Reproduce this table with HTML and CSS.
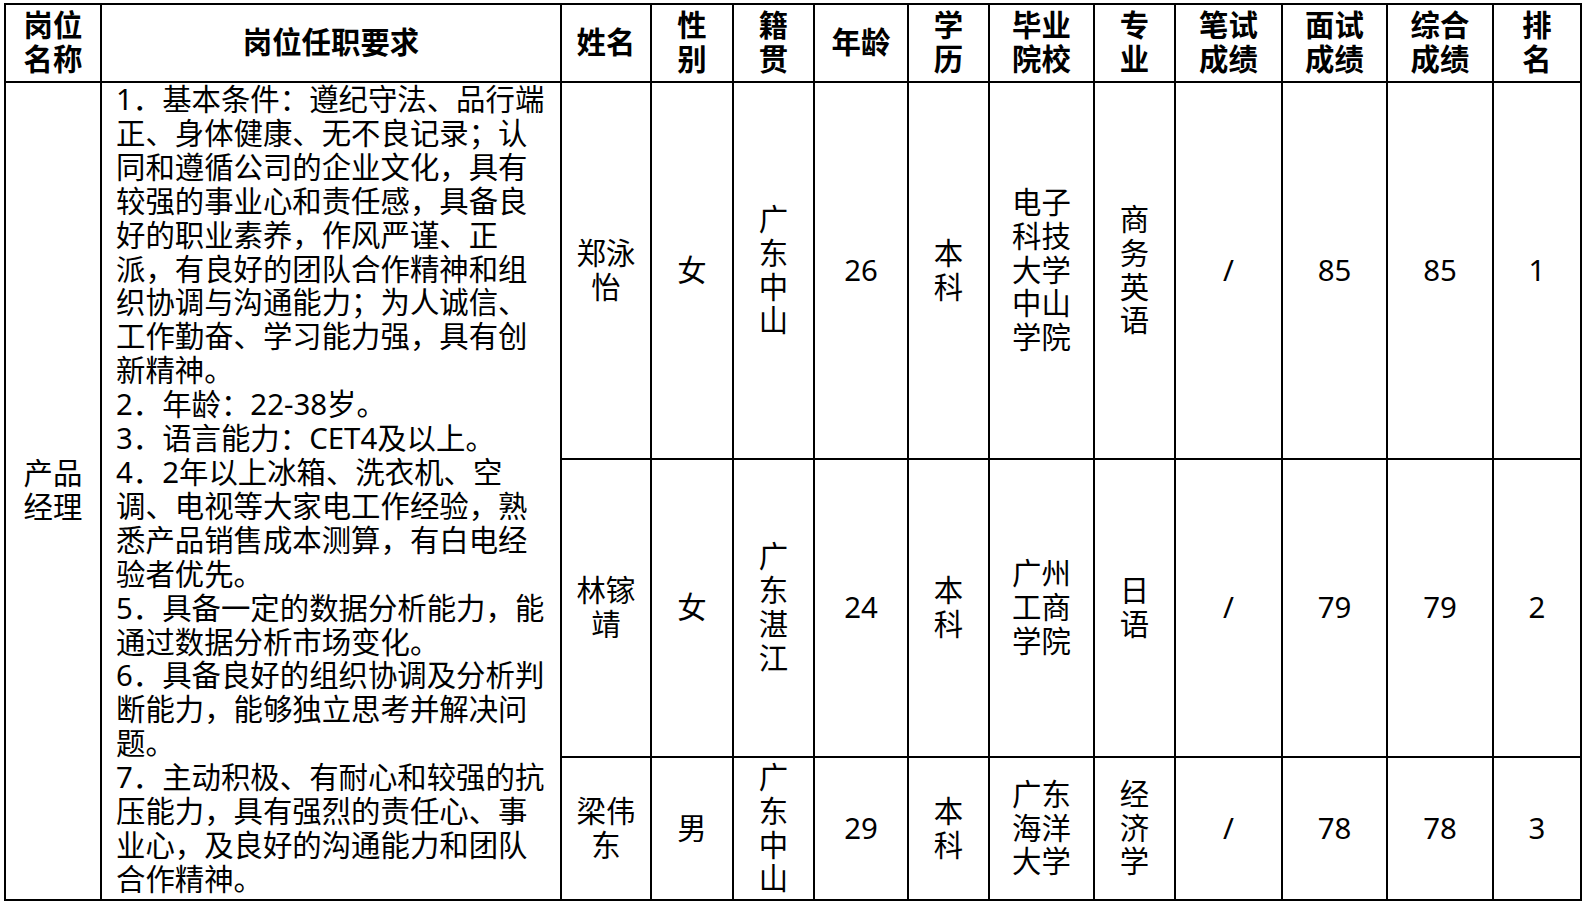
FILE: index.html
```html
<!DOCTYPE html>
<html lang="zh-CN">
<head>
<meta charset="utf-8">
<title>岗位任职要求</title>
<link rel="stylesheet" href="styles.css">
</head>
<body>
<table class="grid">
  <colgroup>
    <col class="w96">
    <col class="w460">
    <col class="w90">
    <col class="w82">
    <col class="w81">
    <col class="w94">
    <col class="w81">
    <col class="w105">
    <col class="w81">
    <col class="w107">
    <col class="w105">
    <col class="w106">
    <col class="w88">
  </colgroup>
  <thead>
    <tr class="head">
      <th>岗位<br>名称</th>
      <th>岗位任职要求</th>
      <th>姓名</th>
      <th>性<br>别</th>
      <th>籍<br>贯</th>
      <th>年龄</th>
      <th>学<br>历</th>
      <th>毕业<br>院校</th>
      <th>专<br>业</th>
      <th>笔试<br>成绩</th>
      <th>面试<br>成绩</th>
      <th>综合<br>成绩</th>
      <th>排<br>名</th>
    </tr>
  </thead>
  <tbody>
    <tr class="r1">
      <td rowspan="3">产品<br>经理</td>
      <td rowspan="3" class="req">1．基本条件：遵纪守法、品行端<br>正、身体健康、无不良记录；认<br>同和遵循公司的企业文化，具有<br>较强的事业心和责任感，具备良<br>好的职业素养，作风严谨、正<br>派，有良好的团队合作精神和组<br>织协调与沟通能力；为人诚信、<br>工作勤奋、学习能力强，具有创<br>新精神。<br>2．年龄：22-38岁。<br>3．语言能力：CET4及以上。<br>4．2年以上冰箱、洗衣机、空<br>调、电视等大家电工作经验，熟<br>悉产品销售成本测算，有白电经<br>验者优先。<br>5．具备一定的数据分析能力，能<br>通过数据分析市场变化。<br>6．具备良好的组织协调及分析判<br>断能力，能够独立思考并解决问<br>题。<br>7．主动积极、有耐心和较强的抗<br>压能力，具有强烈的责任心、事<br>业心，及良好的沟通能力和团队<br>合作精神。</td>
      <td>郑泳<br>怡</td>
      <td>女</td>
      <td>广<br>东<br>中<br>山</td>
      <td>26</td>
      <td>本<br>科</td>
      <td>电子<br>科技<br>大学<br>中山<br>学院</td>
      <td>商<br>务<br>英<br>语</td>
      <td>/</td>
      <td>85</td>
      <td>85</td>
      <td>1</td>
    </tr>
    <tr class="r2">
      <td>林镓<br>靖</td>
      <td>女</td>
      <td>广<br>东<br>湛<br>江</td>
      <td>24</td>
      <td>本<br>科</td>
      <td>广州<br>工商<br>学院</td>
      <td>日<br>语</td>
      <td>/</td>
      <td>79</td>
      <td>79</td>
      <td>2</td>
    </tr>
    <tr class="r3">
      <td>梁伟<br>东</td>
      <td>男</td>
      <td>广<br>东<br>中<br>山</td>
      <td>29</td>
      <td>本<br>科</td>
      <td>广东<br>海洋<br>大学</td>
      <td>经<br>济<br>学</td>
      <td>/</td>
      <td>78</td>
      <td>78</td>
      <td>3</td>
    </tr>
  </tbody>
</table>
</body>
</html>
```

FILE: styles.css
```css
html, body {
  margin: 0;
  padding: 0;
  background: #ffffff;
}

body {
  font-family: "Noto Sans", "Noto Sans CJK SC", sans-serif;
  color: #000000;
  overflow: hidden;
}

.grid {
  border-collapse: collapse;
  table-layout: fixed;
  width: 1578px;
  margin: 3px 0 0 4px;
  border: 2px solid #000;
}

.w96 { width: 96px; }
.w460 { width: 460px; }
.w90 { width: 90px; }
.w82 { width: 82px; }
.w81 { width: 81px; }
.w94 { width: 94px; }
.w105 { width: 105px; }
.w107 { width: 107px; }
.w106 { width: 106px; }
.w88 { width: 88px; }

.grid th,
.grid td {
  border: 2px solid #000;
  padding: 2px 4px;
  font-size: 29.4px;
  line-height: 33.9px;
  text-align: center;
  vertical-align: middle;
  white-space: nowrap;
}

.grid th {
  font-weight: 700;
}

.head { height: 78px; }
.r1 { height: 377px; }
.r2 { height: 298px; }
.r3 { height: 143px; }

.grid td.req {
  text-align: left;
  vertical-align: top;
  padding: 0 4px 0 14px;
}
```
